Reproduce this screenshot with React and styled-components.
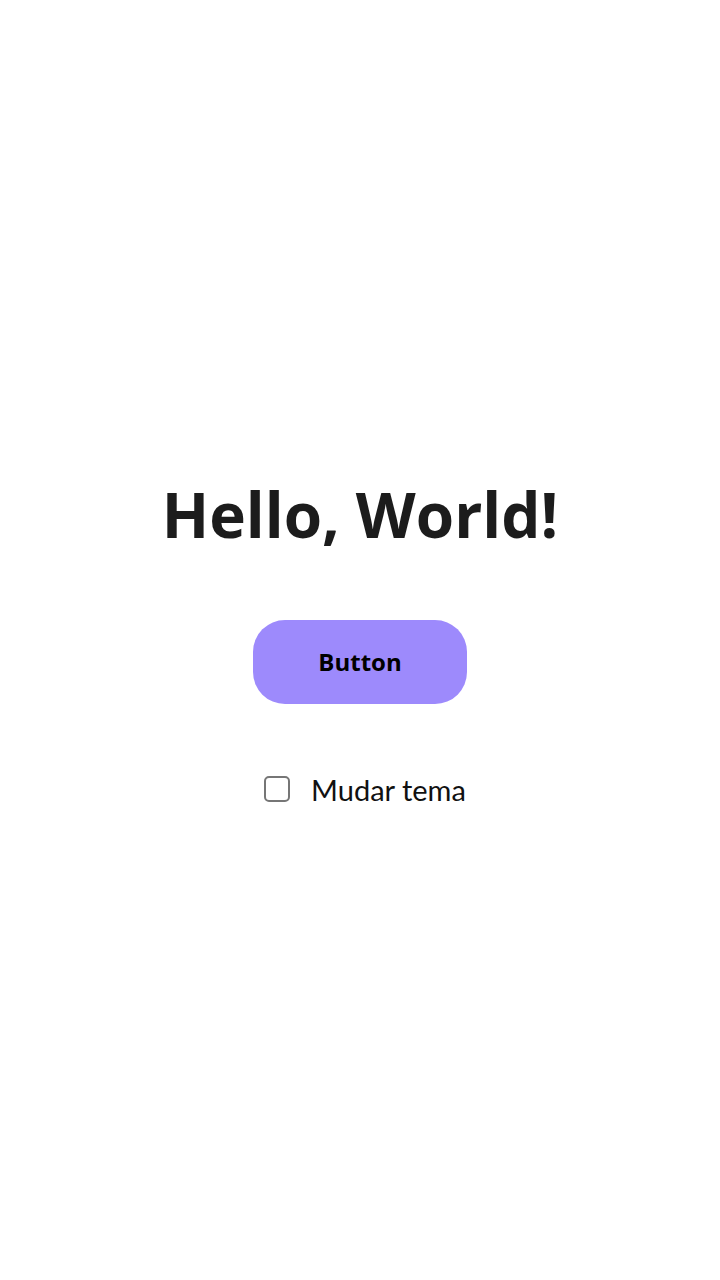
import React from "react";
import styled, { createGlobalStyle } from "styled-components";

const Global = createGlobalStyle`
  html, body { margin: 0; padding: 0; background: #ffffff; }
  body { font-family: "Open Sans", "Noto Sans", sans-serif; }
`;

const Page = styled.main`
  min-height: 100vh;
  box-sizing: border-box;
  padding-top: 4px;
  display: flex;
  flex-direction: column;
  align-items: center;
  justify-content: center;
`;

const Title = styled.h1`
  margin: 0;
  font-family: "Open Sans", sans-serif;
  font-weight: 700;
  font-size: 62px;
  line-height: 72px;
  color: #1c1c1c;
`;

const Button = styled.button`
  margin-top: 70px;
  width: 214px;
  height: 84px;
  border: none;
  border-radius: 32px;
  background: #9d8afc;
  color: #000;
  font-family: "Open Sans", sans-serif;
  font-weight: 700;
  font-size: 24px;
  cursor: pointer;
`;

const Toggle = styled.label`
  margin-top: 68px;
  margin-left: 10px;
  display: flex;
  align-items: center;
  gap: 21px;
  font-family: "Lato", sans-serif;
  font-size: 29px;
  color: #111;
`;

const Box = styled.input`
  appearance: none;
  margin: 0;
  width: 26px;
  height: 26px;
  border: 2px solid #767676;
  border-radius: 5px;
  background: #fff;
  box-sizing: border-box;
`;

export default function App() {
  return (
    <>
      <Global />
      <Page>
        <Title>Hello, World!</Title>
        <Button>Button</Button>
        <Toggle>
          <Box type="checkbox" />
          Mudar tema
        </Toggle>
      </Page>
    </>
  );
}
